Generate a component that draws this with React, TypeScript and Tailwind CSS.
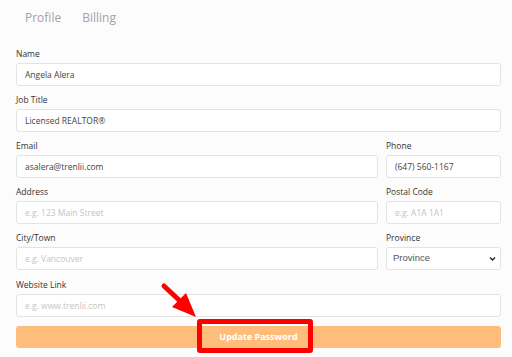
import React from 'react';

const font = { fontFamily: '"Open Sans", "Noto Sans", Arial, sans-serif' };

function Field({ label, value, placeholder }: { label: string; value?: string; placeholder?: string }) {
  return (
    <div className="flex flex-col">
      <label className="text-[8.5px] leading-[12px] text-[#333] mb-[3px]">{label}</label>
      <input
        readOnly
        value={value ?? ''}
        placeholder={placeholder}
        className="h-[23px] w-full rounded-[3px] border border-[#e3e3e3] bg-white px-[8px] text-[8.5px] text-[#444] placeholder:text-[#c4c4c4] outline-none"
      />
    </div>
  );
}

export default function App() {
  return (
    <div className="w-[512px] h-[357px] bg-[#fcfcfc] relative overflow-hidden" style={font}>
      {/* Tabs */}
      <div className="flex gap-[21px] pl-[25px] pt-[9px] h-[48px] text-[12px] text-[#a3a3a3]">
        <span>Profile</span>
        <span>Billing</span>
      </div>

      <div className="w-[485px] ml-[16px] flex flex-col gap-[8px]">
        <Field label="Name" value="Angela Alera" />
        <Field label="Job Title" value="Licensed REALTOR®" />
        <div className="grid grid-cols-[362px_115px] gap-x-[8px] gap-y-[8px]">
          <Field label="Email" value="asalera@trenlii.com" />
          <Field label="Phone" value="(647) 560-1167" />
          <Field label="Address" placeholder="e.g. 123 Main Street" />
          <Field label="Postal Code" placeholder="e.g. A1A 1A1" />
          <Field label="City/Town" placeholder="e.g. Vancouver" />
          <div className="flex flex-col">
            <label className="text-[8.5px] leading-[12px] text-[#333] mb-[3px]">Province</label>
            <div
              className="relative h-[23px] rounded-[3px] border border-[#e3e3e3] bg-white flex items-center px-[6px] text-[9.5px] text-[#555]"
              style={{ fontFamily: '"Liberation Sans", Arial, sans-serif' }}
            >
              <span>Province</span>
              <svg className="absolute right-[4px] top-[8px]" width="7" height="6" viewBox="0 0 7 6">
                <path d="M1 1.5 L3.5 4 L6 1.5" fill="none" stroke="#222" strokeWidth="1.4" />
              </svg>
            </div>
          </div>
        </div>
        <div className="mt-[1px]">
          <Field label="Website Link" placeholder="e.g. www.trenlii.com" />
        </div>
        <button className="mt-[1px] h-[22px] w-full rounded-[3px] bg-[#ffbd7c] text-white text-[9px] font-bold">
          Update Password
        </button>
      </div>

      {/* annotation box */}
      <div className="absolute left-[197px] top-[319px] w-[116px] h-[34px] border-[5px] border-[#ff0000] rounded-[3px]" />
      {/* annotation arrow */}
      <svg className="absolute left-0 top-0" width="512" height="357" viewBox="0 0 512 357">
        <line x1="164" y1="286" x2="180" y2="301" stroke="#ff0000" strokeWidth="5" strokeLinecap="round" />
        <polygon points="172,307 186,293 196,317" fill="#ff0000" />
      </svg>
    </div>
  );
}
